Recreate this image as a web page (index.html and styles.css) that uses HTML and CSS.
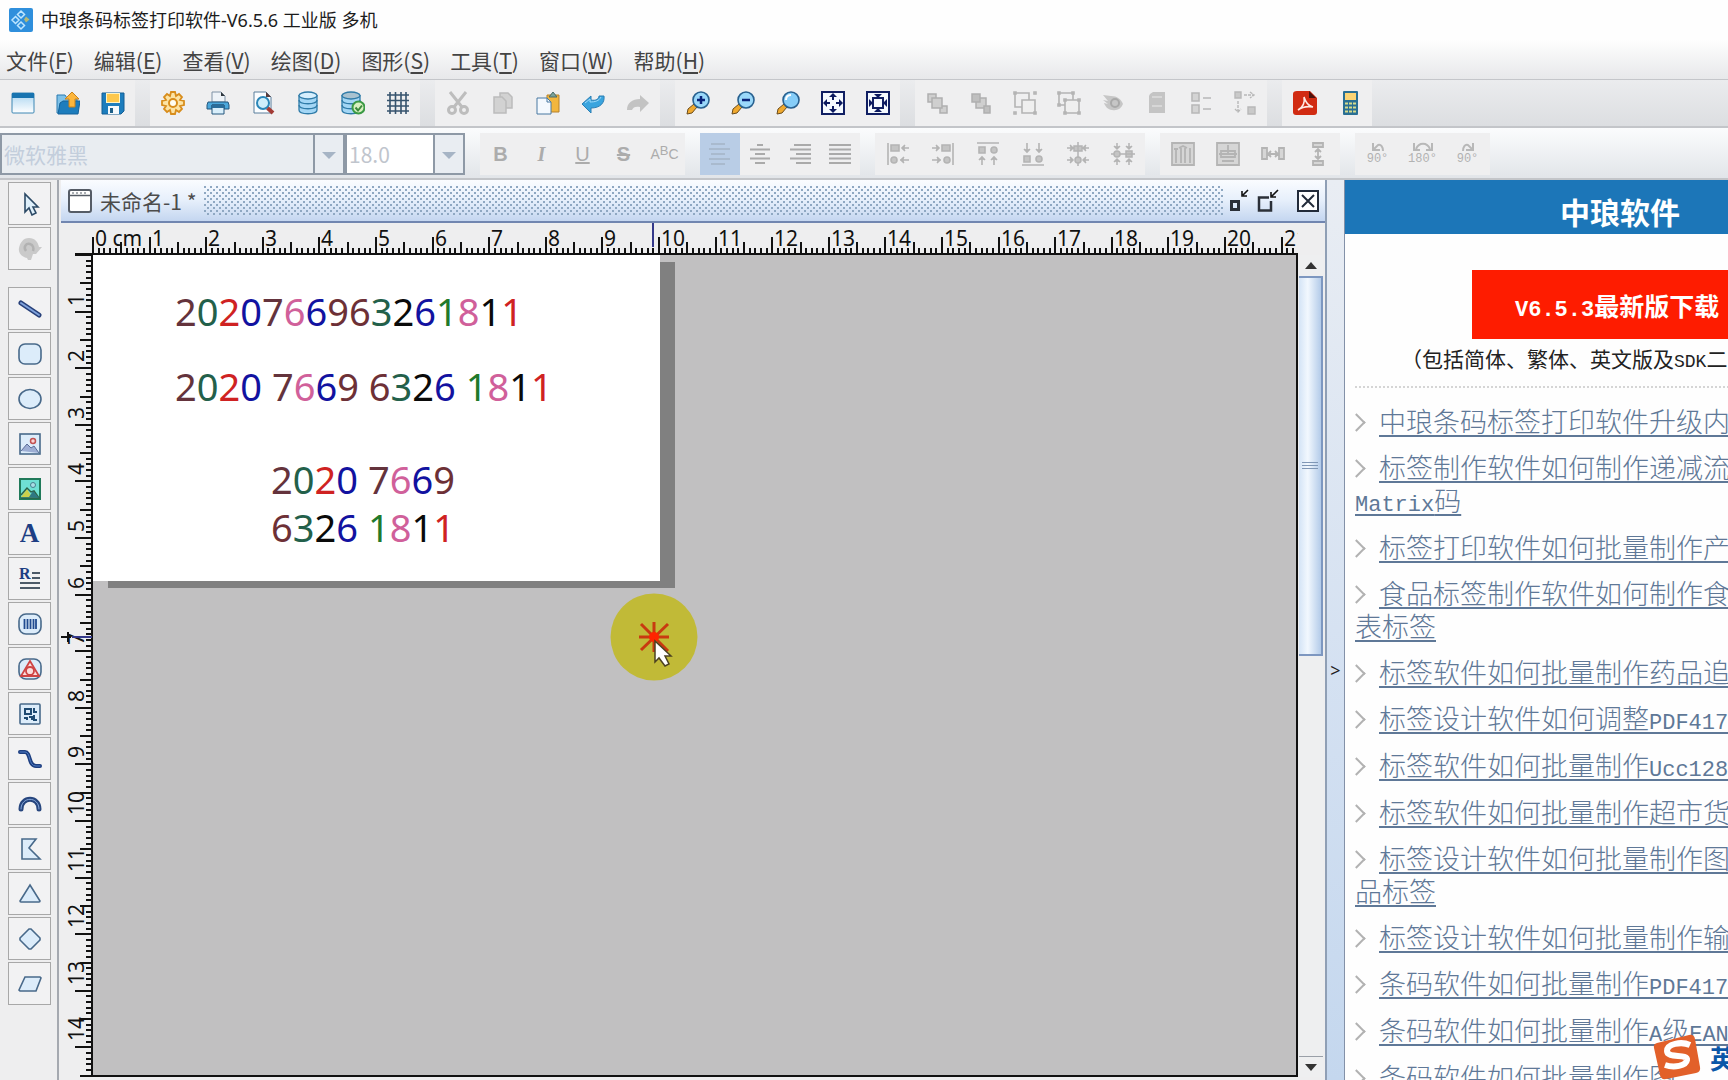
FILE: index.html
```html
<!DOCTYPE html>
<html lang="zh-CN">
<head>
<meta charset="utf-8">
<title>中琅条码标签打印软件-V6.5.6 工业版 多机</title>
<link rel="stylesheet" href="styles.css">
<script src="ruler.js" defer></script>
</head>
<body>
<header class="titlebar">
  <svg class="app-logo" viewBox="0 0 24 24"><rect width="24" height="24" rx="2" fill="#2f8fdc"/><g fill="none" stroke="#bfe6ff" stroke-width="1.5"><path d="M12 3l3.500 3.500-3.500 3.500-3.500-3.500zM6.500 8.500l3.500 3.500-3.500 3.500L3 12zM12 14l3.500 3.500L12 21l-3.500-3.500z"/></g><path d="M17 8.500l3.500 3-3.500 3-2-3z" fill="#b5b878"/></svg>
  <h1 class="app-title">中琅条码标签打印软件-V6.5.6 工业版 多机</h1>
</header>
<nav class="menubar">
  <button>文件(<u>F</u>)</button><button>编辑(<u>E</u>)</button><button>查看(<u>V</u>)</button><button>绘图(<u>D</u>)</button><button>图形(<u>S</u>)</button><button>工具(<u>T</u>)</button><button>窗口(<u>W</u>)</button><button>帮助(<u>H</u>)</button>
</nav>

<div class="toolbar" role="toolbar" aria-label="标准">
  <div class="group">
    <button aria-label="新建"><svg viewBox="0 0 24 24"><defs><linearGradient id="win" x2="0" y2="1"><stop stop-color="#a8d4f0"/><stop offset="1" stop-color="#fff"/></linearGradient></defs><rect x="1" y="2" width="22" height="20" rx="1" fill="url(#win)" stroke="#3c87b4"/><path d="M1 2h22v5H1z" fill="#1874b0"/></svg></button>
    <button aria-label="打开"><svg viewBox="0 0 24 24"><path d="M1 4h8l2 3h10v15H1z" fill="#7ec1e8" stroke="#2b7bb0"/><path d="M4 12l3-2h17l-2 13H2z" fill="#1d7dbd" stroke="#14639b"/><path d="M16 1l7 7h-4v8h-6V8H9z" fill="#fdb63c" stroke="#c9821a"/></svg></button>
    <button aria-label="保存"><svg viewBox="0 0 24 24"><path d="M1 2h22v18l-3 3H1z" fill="#1d7dbd" stroke="#155f94"/><path d="M5 2h14v10H5z" fill="#fff4c2"/><path d="M6 3h12v8H6z" fill="#fdc84c"/><path d="M7 15h11v8H7z" fill="#f4f9fc"/><path d="M9 17h3v5H9z" fill="#1d5f88"/></svg></button>
  </div>
  <div class="group">
    <button aria-label="设置"><svg viewBox="0 0 24 24" fill="none" stroke="#d88d1c"><path d="M10 1h4l1 4 3-2 3 3-2 3 4 1v4l-4 1 2 3-3 3-3-2-1 4h-4l-1-4-3 2-3-3 2-3-4-1v-4l4-1-2-3 3-3 3 2z" fill="#fce3a4" stroke-width="1.800"/><circle cx="12" cy="12" r="4" fill="#fffdf2" stroke-width="2"/></svg></button>
    <button aria-label="打印"><svg viewBox="0 0 24 24"><path d="M6 1h9l4 4v6H6z" fill="#eef3f8" stroke="#7e92a6"/><path d="M15 1v4h4z" fill="#30373d"/><path d="M2 11h20l1 3v4h-5v-4H6v4H1v-4z" fill="#4ba7db" stroke="#25577c"/><path d="M6 14h12v9H6z" fill="#d9effb" stroke="#25577c"/><path d="M6 14h12v3H6z" fill="#2a6d9b"/></svg></button>
    <button aria-label="打印预览"><svg viewBox="0 0 24 24"><path d="M3 1h12l5 5v16H3z" fill="#fbfdff" stroke="#5b7f9c"/><path d="M15 1v5h5z" fill="#5a3c3c"/><circle cx="12" cy="12" r="6" fill="#cdeefb" stroke="#2a86b8" stroke-width="2"/><path d="M16.500 17l5.500 5" stroke="#a33b35" stroke-width="4"/></svg></button>
    <button aria-label="数据库"><svg viewBox="0 0 24 24" fill="#a3d6f5" stroke="#2f7ba8" stroke-width="1.300"><path d="M3 4v15c0 5 18 5 18 0V4"/><path d="M3 14c0 5 18 5 18 0M3 9c0 5 18 5 18 0" fill="none"/><ellipse cx="12" cy="4.500" rx="9" ry="3.500" fill="#d6effd"/></svg></button>
    <button aria-label="数据库连接"><svg viewBox="0 0 24 24" fill="#a3d6f5" stroke="#2f7ba8" stroke-width="1.300"><path d="M1 4v15c0 5 18 5 18 0V4"/><path d="M1 14c0 5 18 5 18 0M1 9c0 5 18 5 18 0" fill="none"/><ellipse cx="10" cy="4.500" rx="9" ry="3.500" fill="#a9c2d0"/><circle cx="17.500" cy="16.500" r="6" fill="#d8f0c0" stroke="#3b9a45" stroke-width="2"/><path d="M14.500 16.500l2.500 3 4-5" fill="none" stroke="#3b8a3b" stroke-width="2"/></svg></button>
    <button aria-label="网格"><svg viewBox="0 0 24 24" stroke="#36536d" stroke-width="1.600"><path d="M4 1v22M9.500 1v22M15 1v22M20 1v22M1 4h22M1 9.500h22M1 15h22M1 20h22"/></svg></button>
  </div>
  <div class="group">
    <button disabled aria-label="剪切"><svg viewBox="0 0 24 24" fill="none" stroke="#bdbdbd" stroke-width="3"><path d="M4 1l12 15M20 1L8 16"/><circle cx="6" cy="19" r="3.500"/><circle cx="18" cy="19" r="3.500"/></svg></button>
    <button disabled aria-label="复制"><svg viewBox="0 0 24 24" fill="#d2d2d2" stroke="#bcbcbc" stroke-width="1.500"><path d="M9 2h8l4 4v11H9z"/><path d="M3 6h8l4 4v12H3z"/></svg></button>
    <button aria-label="粘贴"><svg viewBox="0 0 24 24"><path d="M11 4h12v17H11z" fill="#f2b63e" stroke="#b7822a"/><path d="M13 6l4-5 4 5z" fill="#7aa39a" stroke="#496a68"/><path d="M1 7h10l4 4v12H1z" fill="#f4f9fe" stroke="#4879a2"/><path d="M11 7v4h4" fill="none" stroke="#4879a2"/></svg></button>
    <button aria-label="撤销"><svg viewBox="0 0 24 24"><path d="M1 13l9-8v4c5 1 8-1 8-4h5c1 7-4 12-13 12v5z" fill="#3aa4de" stroke="#2a7eb4"/><path d="M4 12l5-4v3c5 0 9-1 11-5" fill="none" stroke="#9fdafa"/></svg></button>
    <button disabled aria-label="重做"><svg viewBox="0 0 24 24"><path d="M23 12l-9-8v4C6 8 1 12 1 19h5c1-3 4-4 8-3v5z" fill="#c3c3c3"/></svg></button>
  </div>
  <div class="group">
    <button aria-label="放大"><svg viewBox="0 0 24 24"><path d="M1 23l1-5 6-5 3 3-5 6z" fill="#f0a92e" stroke="#6b4c1c"/><circle cx="15" cy="9" r="8" fill="#9ad8fa" stroke="#28608f" stroke-width="1.600"/><path d="M15 5v8M11 9h8" stroke="#09237a" stroke-width="2.500"/></svg></button>
    <button aria-label="缩小"><svg viewBox="0 0 24 24"><path d="M1 23l1-5 6-5 3 3-5 6z" fill="#f0a92e" stroke="#6b4c1c"/><circle cx="15" cy="9" r="8" fill="#9ad8fa" stroke="#28608f" stroke-width="1.600"/><path d="M11 9h8" stroke="#09237a" stroke-width="2.500"/></svg></button>
    <button aria-label="原始大小"><svg viewBox="0 0 24 24"><path d="M1 23l1-5 6-5 3 3-5 6z" fill="#f0a92e" stroke="#6b4c1c"/><circle cx="15" cy="9" r="8" fill="#86cdf8" stroke="#28608f" stroke-width="1.600"/><path d="M10 9c0-3 2-5 5-5" fill="none" stroke="#fff" stroke-width="2"/></svg></button>
    <button aria-label="适合窗口"><svg viewBox="0 0 24 24"><rect x="1" y="1" width="22" height="22" fill="#f5faff" stroke="#101f63" stroke-width="2"/><path d="M12 2l4 4h-3v3h-2V6H8zM12 22l4-4h-3v-3h-2v3H8zM2 12l4-4v3h3v2H6v3zM22 12l-4-4v3h-3v2h3v3z" fill="#0c1a60"/></svg></button>
    <button aria-label="适合页面"><svg viewBox="0 0 24 24"><rect x="1" y="1" width="22" height="22" fill="#f5faff" stroke="#101f63" stroke-width="2"/><rect x="7" y="7" width="10" height="10" fill="none" stroke="#101f63" stroke-width="2"/><path d="M12 7L8 3h8zM12 17l-4 4h8zM7 12L3 8v8zM17 12l4-4v8z" fill="#0c1a60"/></svg></button>
  </div>
  <div class="group mid">
    <button disabled aria-label="置于顶层"><svg viewBox="0 0 24 24" fill="#cfcfcf" stroke="#b0b0b0" stroke-width="1.500"><path d="M3 3h8v8H3zM15 15h7v7h-7z"/><path d="M7 7h10v10H7z"/></svg></button>
    <button disabled aria-label="置于底层"><svg viewBox="0 0 24 24" fill="#cfcfcf" stroke="#b0b0b0" stroke-width="1.500"><path d="M7 7h10v10H7z"/><path d="M3 3h8v8H3zM15 15h6v7h-6z" fill="#bfbfbf"/></svg></button>
    <button disabled aria-label="组合"><svg viewBox="0 0 24 24" fill="none" stroke="#b4b4b4" stroke-width="1.600"><path d="M2 2h14v14H2z"/><path d="M9 9h13v13H9z" fill="#efefef"/><path d="M1 1h2v2H1zM21 1h2v2h-2zM1 21h2v2H1zM21 21h2v2h-2z"/></svg></button>
    <button disabled aria-label="取消组合"><svg viewBox="0 0 24 24" fill="none" stroke="#b4b4b4" stroke-width="1.600"><path d="M2 2h14v12H2z"/><path d="M8 9h14v13H8z" fill="#efefef"/><path d="M1 1h2v2H1zM15 1h2v2h-2zM1 13h2v2H1zM21 8h2v2h-2zM7 21h2v2H7zM21 21h2v2h-2zM7 8h2v2H7z"/></svg></button>
    <button disabled aria-label="显示"><svg viewBox="0 0 24 24"><path d="M2 4l8 1c6 0 10 3 12 8-2 5-6 7-11 6-4 0-7-4-8-7l4 1-5-4 5 1z" fill="#c6c6c6"/><circle cx="14" cy="12" r="4" fill="none" stroke="#a9a9a9" stroke-width="2"/></svg></button>
    <button disabled aria-label="锁定"><svg viewBox="0 0 24 24"><path d="M5 3l3-2h12v21H4V5z" fill="#c4c4c4"/><path d="M7 6h10M7 15h10" stroke="#ddd" stroke-width="1.500"/></svg></button>
    <button disabled aria-label="对齐属性"><svg viewBox="0 0 24 24" fill="#d4d4d4" stroke="#b8b8b8" stroke-width="1.600"><path d="M3 2h7v8H3zM3 14h7v8H3zM14 7h8M14 18h8"/></svg></button>
    <button disabled aria-label="顺序"><svg viewBox="0 0 24 24" fill="#c9c9c9" stroke="#b8b8b8" stroke-width="1.400"><path d="M2 1h6v6H2zM15 16h7v7h-7z"/><path d="M11 4h9M17 1l4 3-4 3M5 10v11M2 18l3 3 3-3" fill="none" stroke-dasharray="3 1"/></svg></button>
  </div>
  <div class="group">
    <button aria-label="导出PDF"><svg viewBox="0 0 24 24"><path d="M4 0h13l7 7v14q0 3-3 3H3q-3 0-3-3V3q0-3 4-3z" fill="#d12b12"/><path d="M16 0l7 7h-7z" fill="#4e120d"/><path d="M5 19c5-3 7-8 6-13 2 7 5 9 9 10-6-1-11 0-15 3z" fill="none" stroke="#ffeae4" stroke-width="1.600"/></svg></button>
    <button aria-label="计算器"><svg viewBox="0 0 24 24"><rect x="5" y="0" width="15" height="24" rx="1" fill="#2a6f94"/><path d="M7 2h11v7H7z" fill="#fbd474"/><path d="M7 12.500h11M7 16.500h11M7 20.500h11" stroke="#d5dc8c" stroke-width="2" stroke-dasharray="3 1"/></svg></button>
  </div>
</div>

<div class="toolbar format" role="toolbar" aria-label="格式">
  <label class="combo font"><select disabled aria-label="字体"><option>微软雅黑</option></select></label>
  <label class="combo size"><select disabled aria-label="字号"><option>18.0</option></select></label>
  <div class="group narrow text-tools">
    <button disabled><b>B</b></button><button disabled><i>I</i></button><button disabled><u>U</u></button><button disabled><s>S</s></button><button disabled class="abc">A<sup>B</sup>C</button>
  </div>
  <div class="group narrow">
    <button class="active" aria-label="左对齐"><svg viewBox="0 0 24 24" stroke="#a4b4c6" stroke-width="1.500"><path d="M3 2h14M1 7h21M3 12h14M1 17h21M3 22h14"/></svg></button>
    <button disabled aria-label="居中"><svg viewBox="0 0 24 24" stroke="#aaa" stroke-width="2"><path d="M9 3h6M2 7.500h20M7 12h10M2 16.500h20M7 21h10"/></svg></button>
    <button disabled aria-label="右对齐"><svg viewBox="0 0 24 24" stroke="#aaa" stroke-width="2"><path d="M6 3h17M2 7.500h21M8 12h15M2 16.500h21M8 21h15"/></svg></button>
    <button disabled aria-label="两端对齐"><svg viewBox="0 0 24 24" stroke="#aaa" stroke-width="2"><path d="M1 3h22M1 7.500h22M1 12h22M1 16.500h22M1 21h22"/></svg></button>
  </div>
  <div class="group">
    <button disabled aria-label="左边对齐"><svg viewBox="0 0 24 24" fill="#c4c4c4" stroke="#b4b4b4" stroke-width="1.600"><path d="M2 1v22M5 3h8v6H5zM16 6h7M19 3l-3 3 3 3M14 18h9M18 15l-3 3 3 3"/><circle cx="8" cy="18" r="3"/></svg></button>
    <button disabled aria-label="右边对齐"><svg viewBox="0 0 24 24" fill="#c4c4c4" stroke="#b4b4b4" stroke-width="1.600"><path d="M22 1v22M11 3h8v6h-8zM1 6h7M5 3l3 3-3 3M1 18h9M6 15l3 3-3 3"/><circle cx="16" cy="18" r="3"/></svg></button>
    <button disabled aria-label="顶部对齐"><svg viewBox="0 0 24 24" fill="#c4c4c4" stroke="#b4b4b4" stroke-width="1.600"><path d="M1 1h22M3 5h6v6H3zM6 23v-8M3 18l3-3 3 3M18 23v-8M15 18l3-3 3 3"/><circle cx="18" cy="8" r="3"/></svg></button>
    <button disabled aria-label="底部对齐"><svg viewBox="0 0 24 24" fill="#c4c4c4" stroke="#b4b4b4" stroke-width="1.600"><path d="M1 23h22M3 14h6v6H3zM6 1v9M3 7l3 3 3-3M18 1v9M15 7l3 3 3-3"/><circle cx="18" cy="17" r="3"/></svg></button>
    <button disabled aria-label="水平居中"><svg viewBox="0 0 24 24" fill="#c4c4c4" stroke="#b4b4b4" stroke-width="1.500"><path d="M12 0v24M8 4h8v5H8zM1 6h6M4 3l3 3-3 3M23 6h-6M20 3l-3 3 3 3M1 18h6M4 15l3 3-3 3M23 18h-6M20 15l-3 3 3 3"/><circle cx="12" cy="18" r="3"/></svg></button>
    <button disabled aria-label="垂直居中"><svg viewBox="0 0 24 24" fill="#c4c4c4" stroke="#b4b4b4" stroke-width="1.500"><path d="M0 12h24M15 9h6v6h-6zM6 1v6M3 4l3 3 3-3M6 23v-6M3 20l3-3 3 3M18 1v6M15 4l3 3 3-3M18 23v-6M15 20l3-3 3 3"/><circle cx="6" cy="12" r="3"/></svg></button>
  </div>
  <div class="group">
    <button disabled aria-label="页面水平居中"><svg viewBox="0 0 24 24" fill="#d6d6d6" stroke="#b4b4b4" stroke-width="1.800"><path d="M1 1h22v22H1z"/><path d="M5 21V6M10 21V6M14 21V6M19 21V6M3 7h4M8 6l4-2 4 2"/></svg></button>
    <button disabled aria-label="页面垂直居中"><svg viewBox="0 0 24 24" fill="#d6d6d6" stroke="#b4b4b4" stroke-width="1.800"><path d="M1 1h22v22H1z"/><path d="M5 9h14v6H5zM12 3v8M3 12h18M6 19h12"/></svg></button>
    <button disabled aria-label="水平等距"><svg viewBox="0 0 24 24" fill="#d6d6d6" stroke="#b4b4b4" stroke-width="1.800"><path d="M1 6h5v11H1zM18 6h5v11h-5zM7 12h10M10 9l-3 3 3 3M14 9l3 3-3 3" /></svg></button>
    <button disabled aria-label="垂直等距"><svg viewBox="0 0 24 24" fill="#d6d6d6" stroke="#b4b4b4" stroke-width="1.800"><path d="M7 1h10v4H7zM7 19h10v4H7zM12 7v10M9 10l3-3 3 3M9 14l3 3 3-3"/></svg></button>
  </div>
  <div class="group rotate">
    <button disabled><svg viewBox="0 0 20 10" fill="none" stroke="#b8b8b8" stroke-width="2"><path d="M5 1v7h7M6 7l4-4c3-1 5 2 5 6"/></svg>90°</button>
    <button disabled><svg viewBox="0 0 20 10" fill="none" stroke="#b8b8b8" stroke-width="2"><path d="M1 1v7h6M19 1v7h-6M3 7c3-7 11-7 14 0"/></svg>180°</button>
    <button disabled><svg viewBox="0 0 20 10" fill="none" stroke="#b8b8b8" stroke-width="2"><path d="M15 1v7H8M14 7l-4-4c-3-1-5 2-5 6"/></svg>90°</button>
  </div>
</div>

<main class="workspace">
  <aside class="tools" aria-label="绘图工具">
    <button aria-label="选择"><svg viewBox="0 0 24 24"><path d="M7 2v18l4-4 3 7 4-2-3-6h5z" fill="#dff0fb" stroke="#2c4a66" stroke-width="1.600"/></svg></button>
    <button disabled aria-label="旋转"><svg viewBox="0 0 24 24"><path d="M11 1c6 0 9 4 10 9h3l-6 7h-3l-2 6h-3l-1-2C4 20 0 16 1 11S5 1 11 1z" fill="#cacaca"/><path d="M8 14c-3-4 0-8 4-7 3 1 4 4 3 7" fill="none" stroke="#b2b2b2" stroke-width="2.500"/></svg></button>
    <hr>
    <button aria-label="直线"><svg viewBox="0 0 24 24" stroke-linecap="round"><path d="M3 6l18 12" stroke="#27407a" stroke-width="5"/><path d="M3 6l18 12" stroke="#7fa2dc" stroke-width="2"/></svg></button>
    <button aria-label="矩形"><svg viewBox="0 0 24 24"><rect x="1" y="2" width="22" height="20" rx="6" class="shape"/></svg></button>
    <button aria-label="椭圆"><svg viewBox="0 0 24 24"><ellipse cx="12" cy="12" rx="11" ry="9.500" class="shape"/></svg></button>
    <button aria-label="图片"><svg viewBox="0 0 24 24"><rect x="2" y="2" width="20" height="20" class="shape" stroke-width="2"/><path d="M3 19l6-7 4 4 3-2 5 7" fill="#9daed4" stroke="#5a6c98"/><circle cx="15" cy="9" r="2.500" fill="#fbd6d6" stroke="#c15252" stroke-width="1.500"/></svg></button>
    <button aria-label="彩色图片"><svg viewBox="0 0 24 24"><rect x="2" y="2" width="20" height="20" fill="#6fe0d4" stroke="#207a5a" stroke-width="2"/><path d="M3 20l6-8 5 8z" fill="#cbd04c"/><path d="M3 18l6-7 4 4 3-1 5 7H3" fill="none" stroke="#2c6149" stroke-width="1.500"/><path d="M11 20l4-6 6 7z" fill="#2e7783"/><circle cx="15" cy="8" r="2.500" fill="#a9dfe6" stroke="#48808e"/></svg></button>
    <button aria-label="文字" class="letter">A</button>
    <button aria-label="段落" class="letter para"><span>R</span><svg viewBox="0 0 24 24" stroke="#4c5a68" stroke-width="2"><path d="M14 6h8M14 11h8M2 16h20M2 21h20"/></svg></button>
    <button aria-label="条形码"><svg viewBox="0 0 24 24"><rect x="1" y="2" width="22" height="20" rx="7" class="shape"/><path d="M6.500 7v10M9.500 7v10M12.500 7v10M15.500 7v10M18 7v10" stroke="#204b90" stroke-width="1.800"/></svg></button>
    <button aria-label="图形库"><svg viewBox="0 0 24 24"><rect x="1" y="2" width="22" height="20" rx="7" class="shape"/><path d="M12 4l9 15H3z" fill="#fbdede" stroke="#ce4545" stroke-width="1.800"/><circle cx="12" cy="14" r="4" fill="none" stroke="#ce4545" stroke-width="1.800"/></svg></button>
    <button aria-label="二维码"><svg viewBox="0 0 24 24"><rect x="2" y="2" width="20" height="20" rx="1" class="shape"/><g fill="none" stroke="#1e4a72" stroke-width="2"><path d="M7 7h6v5H7zM16 6v4h3M6 16h3v2M11 15h3v3M16 13v5h3"/></g></svg></button>
    <button aria-label="曲线"><svg viewBox="0 0 24 24" fill="none" stroke-linecap="round"><path d="M2 5h5c6 0 3 14 11 14h4" stroke="#1e3f80" stroke-width="4"/><path d="M2 5h5c6 0 3 14 11 14h4" stroke="#4e7cc4"/></svg></button>
    <button aria-label="圆弧"><svg viewBox="0 0 24 24" fill="none" stroke-linecap="round"><path d="M3 17C3 4 21 4 21 17" stroke="#27467e" stroke-width="5"/><path d="M3 17C3 4 21 4 21 17" stroke="#87a9dc"/></svg></button>
    <button aria-label="多边形"><svg viewBox="0 0 24 24"><path d="M4 2h14l-7 9 11 11H4z" class="shape"/></svg></button>
    <button aria-label="三角形"><svg viewBox="0 0 24 24"><path d="M12 3l10 16q0 1-1 1H3q-1 0-1-1z" class="shape"/></svg></button>
    <button aria-label="菱形"><svg viewBox="0 0 24 24"><path d="M11 2h2l9 9v2l-9 9h-2l-9-9v-2z" class="shape"/></svg></button>
    <button aria-label="平行四边形"><svg viewBox="0 0 24 24"><path d="M7 5h15l1 1-5 13H2l-1-1z" class="shape"/></svg></button>
  </aside>

  <section class="document">
    <header class="doc-title">
      <svg viewBox="0 0 24 24"><rect x="1" y="1" width="22" height="22" rx="2" fill="#fff" stroke="#555c66" stroke-width="2"/><path d="M2 6.500h20" stroke="#555c66" stroke-width="1.500"/><path d="M4 4h16" stroke="#555c66" stroke-dasharray="2"/></svg>
      <h2>未命名-1 *</h2>
      <span class="dots"></span>
      <button aria-label="最小化"><svg viewBox="0 0 24 24" fill="none" stroke="#2b3038" stroke-width="3"><path d="M3.500 12.500h7v8h-7z"/><path d="M20 1l-5 5M14 2v5h5" stroke="#111" stroke-width="1.600"/></svg></button>
      <button aria-label="还原"><svg viewBox="0 0 24 24" fill="none" stroke="#2b3038" stroke-width="2.500"><path d="M13 8.500H3v13h12V12"/><path d="M22 1l-6 6M15 3v5h5" stroke="#111" stroke-width="1.600"/></svg></button>
      <button class="close" aria-label="关闭"><svg viewBox="0 0 24 24" fill="#fff" stroke="#222b3a" stroke-width="2"><path d="M2 2h20v20H2z"/><path d="M6 6l12 12M18 6L6 18"/></svg></button>
    </header>
    <div class="editor">
      <svg class="ruler top" data-origin="32" data-length="21" aria-hidden="true"></svg>
      <svg class="ruler side" data-length="14" aria-hidden="true"></svg>
      <div class="canvas">
        <article class="label-page">
          <p class="code one"><span class="c1">2</span><span class="c2">0</span><span class="c3">2</span><span class="c4">0</span><span class="c1">7</span><span class="c5">6</span><span class="c4">6</span><span class="c6">9</span><span class="c6">6</span><span class="c2">3</span><span class="c7">2</span><span class="c4">6</span><span class="c8">1</span><span class="c5">8</span><span class="c7">1</span><span class="c3">1</span></p>
          <p class="code two"><span class="c1">2</span><span class="c2">0</span><span class="c3">2</span><span class="c4">0</span> <span class="c1">7</span><span class="c5">6</span><span class="c4">6</span><span class="c6">9</span> <span class="c6">6</span><span class="c2">3</span><span class="c7">2</span><span class="c4">6</span> <span class="c8">1</span><span class="c5">8</span><span class="c7">1</span><span class="c3">1</span></p>
          <p class="code three"><span class="c1">2</span><span class="c2">0</span><span class="c3">2</span><span class="c4">0</span> <span class="c1">7</span><span class="c5">6</span><span class="c4">6</span><span class="c6">9</span><br><span class="c6">6</span><span class="c2">3</span><span class="c7">2</span><span class="c4">6</span> <span class="c8">1</span><span class="c5">8</span><span class="c7">1</span><span class="c3">1</span></p>
        </article>
        <svg class="pointer" viewBox="0 0 88 88"><circle cx="44" cy="44" r="43.500" fill="#c1ba37"/><path d="M44 29v30M29 44h30M31 31l27 27M31 57l27-26" stroke="#c83a10" stroke-width="3"/><circle cx="44" cy="44" r="5" fill="#ff2400"/><path d="M45 48v21l4-4 6 8 4-2-4-8h6z" fill="#fff" stroke="#4c4222" stroke-width="1.500"/></svg>
      </div>
      <div class="scrollbar">
        <button aria-label="向上"><svg viewBox="0 0 12 7"><path d="M6 0l6 7H0z"/></svg></button>
        <div class="thumb"><i></i></div>
        <div class="track"></div>
        <button aria-label="向下"><svg viewBox="0 0 12 7"><path d="M0 0h12L6 7z"/></svg></button>
      </div>
    </div>
  </section>

  <button class="divider" aria-label="折叠面板">&gt;</button>

  <aside class="news">
    <div class="news-body">
      <h2>中琅软件</h2>
      <a class="download" href="#"><span>V6.5.3</span>最新版下载</a>
      <p class="note">（包括简体、繁体、英文版及<span>SDK</span>二</p>
      <ul>
        <li><a href="#">中琅条码标签打印软件升级内</a></li>
        <li><a href="#">标签制作软件如何制作递减流<br><span>Matrix</span>码</a></li>
        <li><a href="#">标签打印软件如何批量制作产</a></li>
        <li><a href="#">食品标签制作软件如何制作食<br>表标签</a></li>
        <li><a href="#">标签软件如何批量制作药品追</a></li>
        <li><a href="#">标签设计软件如何调整<span>PDF417</span></a></li>
        <li><a href="#">标签软件如何批量制作<span>Ucc128</span></a></li>
        <li><a href="#">标签软件如何批量制作超市货</a></li>
        <li><a href="#">标签设计软件如何批量制作图<br>品标签</a></li>
        <li><a href="#">标签设计软件如何批量制作输</a></li>
        <li><a href="#">条码软件如何批量制作<span>PDF417</span></a></li>
        <li><a href="#">条码软件如何批量制作<span>A</span>级<span>EAN</span></a></li>
        <li><a href="#">条码软件如何批量制作图</a></li>
      </ul>
    </div>
  </aside>
</main>

<div class="ime">
  <svg viewBox="0 0 48 46"><path d="M4 9L36 1q5-1 6 4l5 28q1 5-4 6L13 45q-5 1-6-4L1 14q-1-4 3-5z" fill="#e2602a"/><path d="M37 11c-9-4-23-1-23 6 0 8 21 2 20 9-1 6-13 8-22 5" fill="none" stroke="#fff" stroke-width="6"/></svg>
  <span>英</span>
</div>
</body>
</html>
```
FILE: styles.css
```css
* { box-sizing: border-box; }

body {
  margin: 0;
  height: 100vh;
  display: flex;
  flex-direction: column;
  overflow: hidden;
  background: #eeeeef;
  color: #222;
  font-family: "Noto Sans CJK SC", sans-serif;
}

button {
  margin: 0;
  padding: 0;
  border: 0;
  background: none;
  font: inherit;
  color: inherit;
}

h1, h2, p, ul { margin: 0; padding: 0; font-weight: 400; }

svg { display: block; flex: none; }

/* Title and menus */
.titlebar {
  flex: none;
  height: 40px;
  padding-left: 9px;
  display: flex;
  align-items: center;
  gap: 8px;
  background: #fefefe;
}
.app-logo { width: 24px; height: 24px; }
.app-title { font: 18px/24px "Noto Sans", "Noto Sans CJK SC", sans-serif; color: #1c1c1c; }

.menubar {
  flex: none;
  height: 40px;
  padding: 0 6px;
  display: flex;
  align-items: center;
  gap: 20px;
  border-bottom: 1px solid #c4c6ca;
  background: linear-gradient(#fefefe, #e7e8ea);
}
.menubar button { font-size: 21px; line-height: 30px; color: #444; }
.menubar u { text-underline-offset: 3px; }

/* Toolbars */
.toolbar {
  flex: none;
  height: 48px;
  display: flex;
  align-items: stretch;
  gap: 15px;
  border-bottom: 2px solid #c3c5c9;
  background: linear-gradient(#ebecee, #dcdee1);
}
.group { display: flex; background: #efeff0; }
.group button {
  width: 45px;
  display: flex;
  align-items: center;
  justify-content: center;
}
.group.mid button { width: 44px; }
.group.narrow button { width: 40px; }
.group svg { width: 24px; height: 24px; }

.format {
  height: 52px;
  padding: 5px 0 3px;
  background: linear-gradient(#fbfcfd, #e2e5e9);
}
.combo { position: relative; display: flex; border: 2px solid #8e99a6; }
.combo::after {
  content: "";
  width: 28px;
  border-left: 2px solid #8e99a6;
  background: #e9edf2;
}
.combo::before {
  content: "";
  position: absolute;
  right: 7px;
  top: 17px;
  border: 7px solid transparent;
  border-top-color: #a6b4c5;
  border-bottom: 0;
}
.combo select {
  flex: 1;
  min-width: 0;
  padding: 0 2px;
  border: 0;
  appearance: none;
  opacity: 1;
  background: #e9edf1;
  color: #c3cedc;
  font: 21px "Noto Sans CJK SC", sans-serif;
}
.combo.font { width: 345px; }
.combo.size { width: 120px; margin-left: -15px; }
.combo.size select { background: #fff; color: #c0c5cd; }

.text-tools { color: #acacac; font: 20px "Liberation Sans", sans-serif; }
.group.text-tools button { width: 41px; }
.text-tools i { font-family: "Liberation Serif", serif; font-weight: 700; }
.text-tools s { font-weight: 700; }
.text-tools .abc { font-size: 14px; }
.text-tools sup { font-size: 13px; line-height: 24px; align-self: flex-start; padding-top: 6px; }
.active { background: #b9cde6; }

.group.rotate button {
  flex-direction: column;
  color: #b2b2b2;
  font: 12px/14px "Liberation Mono", monospace;
}
.rotate svg { width: 20px; height: 10px; }

/* Workspace */
.workspace { flex: 1; min-height: 0; display: flex; }

.tools {
  flex: none;
  width: 59px;
  padding: 2px 8px;
  display: flex;
  flex-direction: column;
  gap: 2px;
  border-right: 2px solid #a5a9b0;
}
.tools button {
  flex: none;
  width: 43px;
  height: 43px;
  display: flex;
  align-items: center;
  justify-content: center;
  border: 1px solid #a8a8a8;
  background: #f2f2f3;
}
.tools hr { flex: none; width: 43px; height: 13px; margin: 0; border: 0; }
.tools svg { width: 24px; height: 24px; }
.shape { fill: #dcecfa; stroke: #48698a; stroke-width: 1.6px; }
.tools .letter { color: #1d3e83; font: 700 27px "Liberation Serif", "DejaVu Serif", serif; }
.tools .para { position: relative; }
.para span { position: absolute; left: 10px; top: 7px; font-size: 16px; line-height: 18px; }

.document {
  flex: 1;
  min-width: 0;
  margin-left: 2px;
  padding-bottom: 3px;
  display: flex;
  flex-direction: column;
  border-right: 2px solid #8f9fb5;
}
.doc-title {
  flex: none;
  height: 43px;
  padding: 0 5px 0 7px;
  display: flex;
  align-items: center;
  gap: 4px;
  border-bottom: 2px solid #7186b0;
  background: linear-gradient(#fafcff, #e6effb 50%, #c4d6f0);
}
.doc-title > svg { width: 24px; height: 24px; }
.doc-title h2 { padding: 0 4px; font-size: 21px; line-height: 30px; color: #4c4c4c; }
.doc-title button svg { width: 24px; height: 24px; }
.doc-title .close { margin-left: 12px; }
.dots {
  flex: 1;
  height: 30px;
  background:
    radial-gradient(circle at 1px 1px, #8fa8c2 1px, transparent 1px) 0 0 / 6px 6px,
    radial-gradient(circle at 4px 4px, #8fa8c2 1px, transparent 1px) 0 0 / 6px 6px;
}

.editor {
  flex: 1;
  min-height: 0;
  display: grid;
  grid-template: 32px minmax(0, 1fr) / 32px minmax(0, 1fr) 27px;
}
.ruler { width: 100%; height: 100%; overflow: hidden; }
.ruler text { font-family: "Noto Sans", sans-serif; font-size: 21px; fill: #111; }
.ruler path { fill: none; stroke: #111; stroke-width: 2px; shape-rendering: crispEdges; }
.ruler .mark { stroke: #34388a; }
.ruler.top { grid-column: 1 / 3; }
.ruler.side { grid-row: 2; }

.canvas {
  grid-area: 2 / 2;
  position: relative;
  overflow: hidden;
  border-right: 2px solid #111;
  border-bottom: 2px solid #111;
  background: #c1c0c1;
}
.label-page {
  position: relative;
  width: 567px;
  height: 326px;
  background: #fff;
  box-shadow: 15px 7px 0 #808080;
}
.code {
  position: absolute;
  font: 38px/48px "Noto Sans", sans-serif;
  white-space: nowrap;
}
.one { left: 82px; top: 32px; }
.two { left: 82px; top: 107px; }
.three { left: 178px; top: 200px; }
.c1 { color: #64333c; }
.c2 { color: #23604a; }
.c3 { color: #cf2222; }
.c4 { color: #1212a0; }
.c5 { color: #d0609a; }
.c6 { color: #6d3036; }
.c7 { color: #0a0a0a; }
.c8 { color: #1f7a2c; }
.pointer { position: absolute; left: 517px; top: 338px; width: 88px; height: 88px; }

.scrollbar {
  grid-area: 2 / 3;
  margin: 0 2px 0 1px;
  display: flex;
  flex-direction: column;
  background: #eeeff0;
}
.scrollbar button {
  flex: none;
  height: 21px;
  display: flex;
  align-items: center;
  justify-content: center;
}
.scrollbar button:last-child { border-top: 1px solid #9aa0a8; }
.scrollbar svg { width: 12px; height: 7px; fill: #333; }
.thumb {
  flex: 47;
  display: flex;
  align-items: center;
  justify-content: center;
  border: 2px solid #7d97c0;
  border-left: 0;
  background: linear-gradient(90deg, #d4e4f6, #f2f8fe 40%, #b3cbe9);
}
.thumb i { width: 16px; height: 8px; background: repeating-linear-gradient(#7f97b6 0 1px, transparent 1px 3px); }
.track { flex: 50; }

.divider {
  flex: none;
  width: 18px;
  padding-top: 80px;
  border-right: 1px solid #8391a8;
  background: linear-gradient(#e9edf3, #d6e2f2 50%, #c4d7ee);
  font: 18px "Noto Sans", sans-serif;
  color: #222;
}

/* News panel, wider than the part that shows */
.news { flex: none; width: 383px; overflow: hidden; background: #fefefe; }
.news-body { width: 550px; }
.news h2 {
  height: 54px;
  color: #fff;
  background: #1c76b8;
  font-size: 30px;
  font-weight: 700;
  line-height: 62px;
  text-align: center;
}
.download {
  display: block;
  width: 296px;
  height: 69px;
  margin: 36px auto 0;
  padding-left: 43px;
  background: #fe1c00;
  color: #fff;
  font-size: 25px;
  font-weight: 700;
  line-height: 70px;
  text-decoration: none;
  white-space: nowrap;
}
.note {
  margin: 0 10px;
  height: 49px;
  padding: 5px 0 0 46px;
  border-bottom: 2px dotted #d5d5d5;
  color: #222;
  font-size: 21px;
  line-height: 29px;
  white-space: nowrap;
}
.download span, .note span, .news li span {
  font-family: "Liberation Mono", monospace;
  line-height: 1;
}
.download span { font-size: 22px; }
.note span { font-size: 18px; }
.news ul { margin: 16px 0 0 10px; list-style: none; }
.news li {
  margin-bottom: 13px;
  color: #999;
  font-size: 27px;
  font-weight: 300;
  line-height: 33px;
  white-space: nowrap;
}
.news li::before {
  content: "";
  display: inline-block;
  width: 11px;
  height: 11px;
  margin: 0 16px 3px -5px;
  border: solid #b2b2b2;
  border-width: 2px 2px 0 0;
  transform: rotate(45deg);
}
.news li a { color: #5f7897; text-underline-offset: 3px; text-decoration-thickness: 2px; }
.news li span { font-size: 22px; font-weight: 400; }

/* Input method badge over the panel */
.ime {
  position: absolute;
  right: 0;
  bottom: 0;
  width: 75px;
  height: 46px;
  display: flex;
  align-items: center;
  gap: 9px;
  overflow: hidden;
}
.ime svg { width: 48px; height: 46px; }
.ime span { color: #0b57a8; font-size: 26px; font-weight: 700; }
```
FILE: ruler.js
```js
// Draws a centimetre scale with millimetre ticks into each ruler.
const CM = 56.6;
const SVG = "http://www.w3.org/2000/svg";

function add(parent, name, attrs, text) {
  const node = document.createElementNS(SVG, name);
  for (const key in attrs) node.setAttribute(key, attrs[key]);
  if (text) node.textContent = text;
  parent.append(node);
}

function tick(mm) {
  if (mm % 10 === 0) return 18;
  return mm % 5 === 0 ? 13 : 7;
}

for (const ruler of document.querySelectorAll(".ruler")) {
  const top = ruler.classList.contains("top");
  const origin = Number(ruler.dataset.origin || 0);
  const cms = Number(ruler.dataset.length);
  let d = top ? "M14 31H2000" : "M31 0V2000";
  for (let mm = 0; mm <= cms * 10 + 9; mm++) {
    const at = origin + Math.round(mm * CM / 10);
    d += top ? `M${at} 32v${-tick(mm)}` : `M32 ${at}h${-tick(mm)}`;
  }
  add(ruler, "path", { d });
  for (let n = top ? 0 : 1; n <= cms; n++) {
    const at = origin + Math.round(n * CM);
    const label = n ? String(n) : "0 cm";
    if (top) add(ruler, "text", { x: at + 2, y: 23 }, label);
    else add(ruler, "text", { transform: `translate(23 ${at - 6}) rotate(-90)` }, label);
  }
  add(ruler, "path", { class: "mark", d: top ? "M592 0v24" : "M11 382h20" });
  if (!top) add(ruler, "path", { d: "M0 382h10M7 377v10" });
}
```
